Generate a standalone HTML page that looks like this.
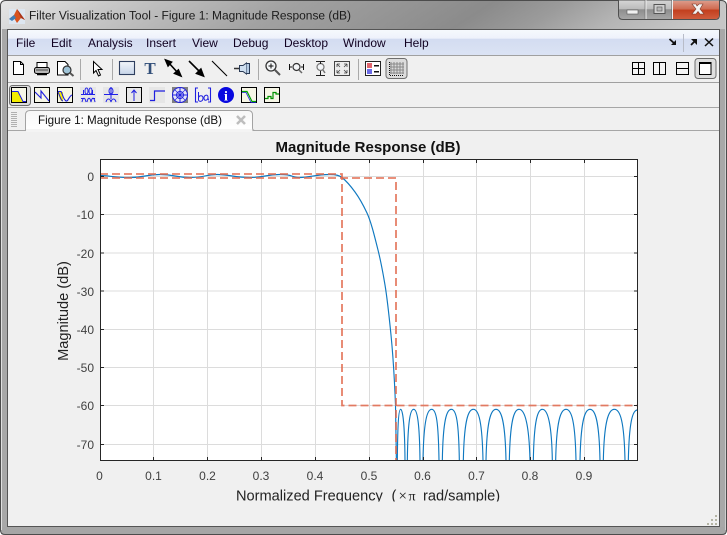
<!DOCTYPE html>
<html><head><meta charset="utf-8"><title>Filter Visualization Tool</title>
<style>
html,body{margin:0;padding:0;background:#fff;width:727px;height:535px;overflow:hidden}
svg{display:block;position:absolute;left:0;top:0}
text{font-family:"Liberation Sans",sans-serif}
</style></head><body>
<svg width="727" height="535" viewBox="0 0 727 535" xmlns="http://www.w3.org/2000/svg">
<defs>
<linearGradient id="tb" x1="0" y1="0" x2="1" y2="0.06">
<stop offset="0" stop-color="#e6e6e6"/><stop offset=".15" stop-color="#c9c9c9"/><stop offset=".4" stop-color="#a2a2a2"/><stop offset=".68" stop-color="#8b8b8b"/><stop offset=".78" stop-color="#9b9b9b"/><stop offset=".88" stop-color="#b4b4b4"/><stop offset="1" stop-color="#c6c6c6"/>
</linearGradient>
<linearGradient id="menu" x1="0" y1="0" x2="0" y2="1">
<stop offset="0" stop-color="#f6f9fd"/><stop offset=".33" stop-color="#eef2fb"/><stop offset=".36" stop-color="#d3dcf1"/><stop offset="1" stop-color="#dbe3f4"/>
</linearGradient>
<linearGradient id="btn" x1="0" y1="0" x2="0" y2="1">
<stop offset="0" stop-color="#d6d6d6"/><stop offset=".45" stop-color="#bcbcbc"/><stop offset=".5" stop-color="#8e8e8e"/><stop offset="1" stop-color="#a8a8a8"/>
</linearGradient>
<linearGradient id="cls" x1="0" y1="0" x2="0" y2="1">
<stop offset="0" stop-color="#dc9a88"/><stop offset=".45" stop-color="#cf6a50"/><stop offset=".5" stop-color="#c23f1e"/><stop offset="1" stop-color="#cf5d3e"/>
</linearGradient>
<linearGradient id="tab" x1="0" y1="0" x2="0" y2="1">
<stop offset="0" stop-color="#f7f7f7"/><stop offset="1" stop-color="#ffffff"/>
</linearGradient>
<linearGradient id="rect" x1="0" y1="0" x2="0" y2="1">
<stop offset="0" stop-color="#f2f5fa"/><stop offset="1" stop-color="#c6d4e8"/>
</linearGradient>
<clipPath id="ax"><rect x="100" y="160" width="538" height="301"/></clipPath>
<clipPath id="xl"><rect x="200" y="480" width="340" height="21.5"/></clipPath>
</defs>

<!-- window frame -->
<path d="M0 6Q0 0 6 0H721Q727 0 727 6V530Q727 535 722 535H5Q0 535 0 530Z" fill="#a6a6a6"/>
<path d="M.5 6Q.5 .5 6 .5H721Q726.5 .5 726.5 6V530Q726.5 534.5 722 534.5H5Q.5 534.5 .5 530Z" fill="none" stroke="#4c4c4c"/>
<path d="M1 6Q1 1 6 1H721Q726 1 726 6V29H1Z" fill="url(#tb)"/>
<rect x="1" y="29" width="6" height="498" fill="#a8a8a8"/>
<rect x="720" y="29" width="6" height="498" fill="#a8a8a8"/>
<path d="M1.5 8V530" stroke="#e0e0e0" fill="none"/>
<path d="M725.5 8V530" stroke="#cfcfcf" fill="none"/>

<!-- MATLAB icon -->
<rect x="9" y="9" width="16" height="15" fill="#dde6f0"/>
<path d="M9 19L14 15 17 9 20 13 25 20 21 18 17 23 14 18Z" fill="#d9531e"/>
<path d="M9 19L14 15 16 18 12 21Z" fill="#3f7fb8"/>
<path d="M17 9L20 13 25 20 21 18Z" fill="#a8341a"/>
<text x="29" y="19.5" font-size="12.3" fill="#1c1c1c" textLength="322" lengthAdjust="spacingAndGlyphs">Filter Visualization Tool - Figure 1: Magnitude Response (dB)</text>

<!-- caption buttons -->
<path d="M618.5 0V15Q618.5 19.5 623 19.5H715Q719.5 19.5 719.5 15V0Z" fill="url(#btn)" stroke="#4f4f4f"/>
<path d="M673 1H719V15Q719 19 715 19H673Z" fill="url(#cls)"/>
<path d="M646 0V19M672.500 0V19" stroke="#efefef" fill="none"/>
<path d="M645 0V19M671.500 0V19" stroke="#6b6b6b" fill="none" opacity=".6"/>
<rect x="627" y="10" width="11" height="4" fill="#f0f0f0" stroke="#555" stroke-width=".6"/>
<rect x="654" y="4.500" width="11" height="9" fill="#cfcfcf" stroke="#555"/>
<rect x="657" y="7" width="5" height="4" fill="#b5b5b5" stroke="#555" stroke-width=".6"/>
<path d="M692 4L696 4 697 6 699 4 703 4 700 9 704 14H700L698 11.500 696 14H692L696 9Z" fill="#f4f4f4" stroke="#7a3a2a" stroke-width=".6"/>

<!-- content -->
<rect x="7" y="29" width="713" height="498" fill="#f0f0f0"/>
<rect x="7.500" y="29.500" width="712" height="497" fill="none" stroke="#555"/>
<rect x="8" y="30" width="711" height="25" fill="url(#menu)"/>
<rect x="8" y="55" width="711" height="1" fill="#a0a0a0"/>
<rect x="8" y="82" width="711" height="1" fill="#a0a0a0"/>
<rect x="8" y="107" width="711" height="1" fill="#a6a6a6"/>
<rect x="8" y="130" width="711" height="1" fill="#a6a6a6"/>

<!-- menu -->
<g font-size="12" fill="#100020">
<text x="16" y="47">File</text><text x="51" y="47">Edit</text><text x="88" y="47">Analysis</text><text x="146" y="47">Insert</text><text x="192" y="47">View</text><text x="233" y="47">Debug</text><text x="284" y="47">Desktop</text><text x="343" y="47">Window</text><text x="404" y="47">Help</text>
</g>
<path d="M669.500 39L675 44" stroke="#111" stroke-width="1.800"/><path d="M676 40V45H671Z" fill="#111"/>
<path d="M683.500 34V52" stroke="#b8bcc8"/>
<path d="M691 45L695 41" stroke="#111" stroke-width="1.800"/><path d="M691 39H697V45Z" fill="#111"/>
<path d="M705 38.500L713 46M713 38.500L705 46" stroke="#111" stroke-width="1.500"/>

<!-- toolbar 1 -->
<g fill="none" stroke="#000">
<path d="M13.500 61.500H20.500L23.500 64.500V74.500H13.500Z" fill="#fff"/><path d="M20.500 61.500V64.500H23.500"/>
<path d="M37 68V62.500H47V68" fill="#fff"/><rect x="34.500" y="67.500" width="15" height="6" rx="2" fill="#b8b8b8"/><path d="M37 74.500H47" stroke-width="1.500"/><path d="M36 70H48" stroke="#444"/>
<path d="M57.500 61.500H65L68 64.500V75H57.500Z" fill="#fff"/>
<circle cx="67" cy="70" r="4" fill="#9fc4d8" stroke="#333" stroke-width="1.200"/><path d="M70 73L73.500 76" stroke-width="2" stroke="#555"/>
<path d="M93.500 61.500V73L96 70.500 98.500 76 100.500 75 98 69.500H102Z" fill="#fff" stroke-width="1"/>
<rect x="119.500" y="61.500" width="15" height="13" fill="url(#rect)" stroke="#2f3f5f" stroke-width="1.100"/>
</g>
<path d="M80.500 59V80M112.500 59V80M258.500 59V80M358.500 59V80" stroke="#a9a9a9"/>
<text x="150" y="74" font-size="17" font-weight="bold" fill="#33507a" text-anchor="middle" style="font-family:'Liberation Serif',serif">T</text>
<g stroke="#000" fill="#000">
<path d="M168 62L178 73" stroke-width="1.600"/><path d="M165 59.500L172 62 168 66.500Z"/><path d="M181.500 76.500L174 73.500 178.500 69.500Z"/>
<path d="M189 61L200 72" stroke-width="1.600"/><path d="M204 76.500L196 73.500 201 68.500Z"/>
<path d="M212 61L227 76" stroke-width="1.100" fill="none"/>
</g>
<g fill="none" stroke="#333">
<path d="M234 68.500H239" stroke-width="1.500"/>
<path d="M239.500 65.500H243L246.500 63V74L243 71.500H239.500Z" fill="#cfdff0" stroke="#2a3a55"/>
<path d="M246.500 63.500H249.500V73.500H246.500" fill="#b6cce4" stroke="#2a3a55"/>
<circle cx="271" cy="66" r="5" fill="#f4f6f8" stroke-width="1.300"/><path d="M275 70L280 75" stroke-width="2" stroke="#555"/><path d="M268.500 66H273.500M271 63.500V68.500" stroke="#111"/>
<circle cx="296.500" cy="67" r="3.500" fill="#f4f6f8" stroke-width="1.200"/><path d="M299 70L302 73" stroke-width="1.500" stroke="#666"/>
<path d="M289.500 64V70M303.500 64V70M290 67H292M301 67H303" stroke="#111"/>
<circle cx="320.500" cy="67" r="3.500" fill="#f4f6f8" stroke="#777" stroke-width="1.200"/><path d="M323 70L325 73" stroke-width="1.500" stroke="#777"/>
<path d="M316 61.500H325M316 75.500H325M320.500 62V64M320.500 71V75" stroke="#222"/>
<rect x="334.500" y="61.500" width="15" height="14" fill="#ececec" stroke="#444" stroke-width="1"/>
<path d="M337 64L340 67M337 64H340M337 64V67M347 64L344 67M347 64H344M347 64V67M337 73L340 70M337 73H340M337 73V70M347 73L344 70M347 73H344M347 73V70" stroke="#444" stroke-width=".8"/>
<rect x="365.500" y="61.500" width="15" height="14" fill="#fff" stroke="#222"/>
</g>
<rect x="367" y="63" width="5" height="5" fill="#e0646c"/><rect x="367" y="69" width="5" height="5" fill="#6a6ae6"/>
<rect x="374" y="65" width="5" height="1.500" fill="#111"/><rect x="374" y="71" width="5" height="1.500" fill="#111"/>
<rect x="386" y="58.500" width="21" height="20" rx="3" fill="#dcdcdc" stroke="#6e6e6e"/>
<g stroke="#8a8a8a" fill="none"><path d="M391 62V74M394 62V74M397 62V74M400 62V74M403 62V74M390 64H404M390 67H404M390 70H404M390 73H404"/></g>
<path d="M389.500 62V75.500H404" stroke="#111" fill="none" stroke-dasharray="1 1"/>

<!-- layout buttons right -->
<g fill="#fff" stroke="#000">
<rect x="632.500" y="62.500" width="12" height="12" fill="#f4f4f4"/><path d="M638.500 62.500V74.500M632.500 68.500H644.500"/>
<rect x="653.500" y="62.500" width="12" height="12" fill="#f4f4f4"/><path d="M659.500 62.500V74.500"/>
<rect x="676.500" y="62.500" width="12" height="12" fill="#f4f4f4"/><path d="M676.500 68.500H688.500"/>
</g>
<rect x="695" y="58.500" width="21" height="20" rx="3" fill="#dedede" stroke="#6e6e6e"/>
<rect x="699.500" y="62.500" width="11.500" height="12" fill="#fff" stroke="#000"/><path d="M699 63H711" stroke="#000" stroke-width="2"/>

<!-- toolbar 2 -->
<rect x="9.500" y="85.500" width="21" height="20" rx="3" fill="#dcdcdc" stroke="#6e6e6e"/>
<g fill="#f6f6e6" stroke="#000">
<rect x="11.500" y="87.500" width="15" height="15"/>
<rect x="34.500" y="87.500" width="15" height="15"/>
<rect x="57.500" y="87.500" width="15" height="15"/>
<rect x="126.500" y="87.500" width="15" height="15" fill="#e8e8e8"/>
<rect x="241.500" y="87.500" width="15" height="15"/>
<rect x="264.500" y="87.500" width="15" height="15"/>
</g>
<path d="M12 92H18L23 102H12Z" fill="#f4ee00"/><path d="M12 91.500H18L23 101.500H26" fill="none" stroke="#1f1fe0" stroke-width="1"/>
<path d="M35 92L41 98V91L49 101" fill="none" stroke="#1f1fe0" stroke-width="1.100"/>
<path d="M58 92H63V101H61C59 97 58 95 58 92Z" fill="#f4ee00"/><path d="M58 91.500H61C63 95 63 99 66 101 68 102 69 96 72 95" fill="none" stroke="#1f1fe0" stroke-width="1.100"/><path d="M58 92C60 96 61 101 63 101" fill="none" stroke="#1f1fe0"/>
<rect x="80" y="87" width="16" height="16" fill="#e6e6e6"/><rect x="103" y="87" width="16" height="16" fill="#e6e6e6"/>
<g fill="none" stroke="#2020e8">
<path d="M81 94.500H95M81 98.500H84M92 98.500H95"/>
<path d="M83.500 90V94M92.500 90V94"/>
<ellipse cx="86.500" cy="91" rx="1.500" ry="3"/><ellipse cx="90.500" cy="91" rx="1.500" ry="3"/>
<path d="M82 102C83 97 85 97 86 102M87 102C88 97 90 97 91 102M91 102C92 97 94 97 95 102"/>
<path d="M104 94.500H118"/><ellipse cx="111" cy="91" rx="2" ry="3"/><path d="M111 87V94M111 95V99"/>
<path d="M106 102C107 98 110 98 111 102 112 98 115 98 116 102"/>
<path d="M134 101V90M131.500 93L134 90 136.500 93" stroke="#1f1fe0"/>
</g>
<rect x="149" y="87" width="16" height="16" fill="#e6e6e6"/>
<path d="M150 100.500H154.500V91H165" fill="none" stroke="#1f1fe0" stroke-width="1.200"/>
<rect x="172" y="87" width="16" height="16" fill="#808080"/>
<circle cx="180" cy="95" r="7.500" fill="#e4e4f4" stroke="#1f1fe0"/>
<g fill="none" stroke="#1f1fe0"><path d="M172.500 95H187.500M180 87.500V102.500"/><circle cx="180" cy="95" r="3.500"/><path d="M175 90L185 100M185 90L175 100" stroke-width=".6"/>
<path d="M198 88H195.500V102H198M208 88H210.500V102H208" stroke-width="1.100"/>
<path d="M198.500 92V100C199 102 203 102 203 98 203 95 199 95 198.500 98" stroke-width="1"/>
<path d="M209 100C208 100 208 99 208 97 208 94 204 95 204 98 204 101 207 101 208 98" stroke-width="1"/>
</g>
<circle cx="226" cy="95" r="8" fill="#0808e0"/>
<text x="226" y="100.500" font-size="14" font-weight="bold" fill="#fff" text-anchor="middle" style="font-family:'Liberation Serif',serif">i</text>
<path d="M242 91.500H247L252 101.500H256" fill="none" stroke="#00a000" stroke-width="1.200"/>
<path d="M242 92.500H246L251 102.500H256" fill="none" stroke="#1f1fe0" stroke-width=".8"/>
<path d="M265 98.500H268V96.500H271V98.500H273V92.500H276V94H279" fill="none" stroke="#009000" stroke-width="1.200"/>

<!-- tab strip -->
<g fill="#b0b0b0"><rect x="11" y="112" width="6" height="1"/><rect x="11" y="114" width="6" height="1"/><rect x="11" y="116" width="6" height="1"/><rect x="11" y="118" width="6" height="1"/><rect x="11" y="120" width="6" height="1"/><rect x="11" y="122" width="6" height="1"/><rect x="11" y="124" width="6" height="1"/><rect x="11" y="126" width="6" height="1"/></g>
<path d="M25.500 130.500V115Q25.500 110.500 30 110.500H248Q252.500 110.500 252.500 115V128Q252.500 130.500 255 130.500" fill="url(#tab)" stroke="#a3a3a3"/>
<rect x="26" y="129" width="226" height="3" fill="#f4f4f4"/>
<text x="38" y="124" font-size="12" fill="#111" textLength="184" lengthAdjust="spacingAndGlyphs">Figure 1: Magnitude Response (dB)</text>
<path d="M237 116L245 124M245 116L237 124" stroke="#bdbdbd" stroke-width="2.500"/>

<!-- plot -->
<rect x="100" y="160" width="537.500" height="300.500" fill="#fff"/>
<g stroke="#dcdcdc" fill="none">
<path d="M153.500 160V460M207.500 160V460M261.500 160V460M315.500 160V460M369.500 160V460M423.500 160V460M476.500 160V460M530.500 160V460M584.500 160V460"/>
<path d="M100 176.500H637M100 214.500H637M100 253H637M100 291H637M100 329.500H637M100 367.500H637M100 405.500H637M100 444.500H637"/>
</g>
<g clip-path="url(#ax)">
<path d="M100 175.500C108 175.500 115 177.500 130 177.500S145 174.500 160 174.500 175 177.500 190 177.500 205 174.500 217 174.500 235 177.500 250 177.500 265 174.500 280 174.500 290 177.500 300 177.500 315 174.500 330 174.500C335 174.500 339 175 342 177.500 347 181.500 351 186.500 355 192 359 197.500 363 204.500 367 213 371 221.800 374 234 378 250 380.500 260 382.500 270 385 285 387 297 389 315 391 335 392.500 350 394.500 380 395.500 405L396.400 461" fill="none" stroke="#0f78c0" stroke-width="1.150"/>
<g transform="translate(380 380) scale(.33333)" fill="none" stroke="#0f78c0" stroke-width="3.400">
<path d="M52 241C53 125 56.500 88 62 88S74 125 75 241"/>
<path d="M82 241C83.500 125 90.500 88 101 88S118.500 125 120 241"/>
<path d="M129 241C131 125 141 88 155 88S175 125 177 241"/>
<path d="M187 241C189 125 199 88 214 88S236 125 238 241"/>
<path d="M250 241C252.500 125 263.500 88 280 88S306.500 125 309 241"/>
<path d="M318 241C320.500 125 331.500 88 348 88S375.500 125 378 241"/>
<path d="M388 241C390.500 125 401 88 417 88S447 125 450 241"/>
<path d="M460 241C462 125 472 88 487 88S515 125 517 241"/>
<path d="M527 241C529.500 125 541 88 558 88S585.500 125 588 241"/>
<path d="M600 241C602.500 125 613.500 88 630 88S657.500 125 660 241"/>
<path d="M670 241C672.500 125 685 88 703 88S732.500 125 735 241"/>
<path d="M745 241C747.500 125 758 90 772 90"/>
</g>
<g fill="none" stroke="#e2684c" stroke-opacity=".85" stroke-width="1.800" stroke-dasharray="8 4">
<path d="M100 174H342V405.500H638"/>
<path d="M100 178H396V461"/>
</g>
</g>
<rect x="100.500" y="159.500" width="537" height="301" fill="none" stroke="#262626"/>
<path d="M153.500 160V163M207.500 160V163M261.500 160V163M315.500 160V163M369.500 160V163M423.500 160V163M476.500 160V163M530.500 160V163M584.500 160V163M153.500 460V457M207.500 460V457M261.500 460V457M315.500 460V457M369.500 460V457M423.500 460V457M476.500 460V457M530.500 460V457M584.500 460V457M101 176.500H104M101 214.500H104M101 253H104M101 291H104M101 329.500H104M101 367.500H104M101 405.500H104M101 444.500H104M637 176.500H634M637 214.500H634M637 253H634M637 291H634M637 329.500H634M637 367.500H634M637 405.500H634M637 444.500H634" stroke="#262626" fill="none"/>

<text x="368" y="152" font-size="15" font-weight="bold" fill="#111" text-anchor="middle">Magnitude Response (dB)</text>
<g font-size="12" fill="#404040" text-anchor="end">
<text x="94" y="181">0</text><text x="94" y="219">-10</text><text x="94" y="258">-20</text><text x="94" y="296">-30</text><text x="94" y="334">-40</text><text x="94" y="372">-50</text><text x="94" y="410">-60</text><text x="94" y="449">-70</text>
</g>
<g font-size="12" fill="#404040" text-anchor="middle">
<text x="99.500" y="480">0</text><text x="153.500" y="480">0.1</text><text x="207.500" y="480">0.2</text><text x="261" y="480">0.3</text><text x="315" y="480">0.4</text><text x="369" y="480">0.5</text><text x="422.500" y="480">0.6</text><text x="476.500" y="480">0.7</text><text x="530" y="480">0.8</text><text x="584" y="480">0.9</text>
</g>
<text transform="translate(68 311) rotate(-90)" font-size="14.6" fill="#222" text-anchor="middle">Magnitude (dB)</text>
<g clip-path="url(#xl)" font-size="14.6" fill="#222">
<text x="236" y="500.500">Normalized Frequency</text>
<text x="391.500" y="500.500">(</text>
<text x="398.500" y="500.500" style="font-family:'Liberation Serif',serif" font-size="15">×</text>
<text x="408.500" y="500.500" style="font-family:'Liberation Serif',serif" font-size="14">π</text>
<text x="423" y="500.500">rad/sample)</text>
</g>

<!-- grip -->
<g fill="#b4b4a4"><rect x="715" y="515" width="2" height="2"/><rect x="711" y="519" width="2" height="2"/><rect x="715" y="519" width="2" height="2"/><rect x="707" y="523" width="2" height="2"/><rect x="711" y="523" width="2" height="2"/><rect x="715" y="523" width="2" height="2"/></g>
</svg>
</body></html>
